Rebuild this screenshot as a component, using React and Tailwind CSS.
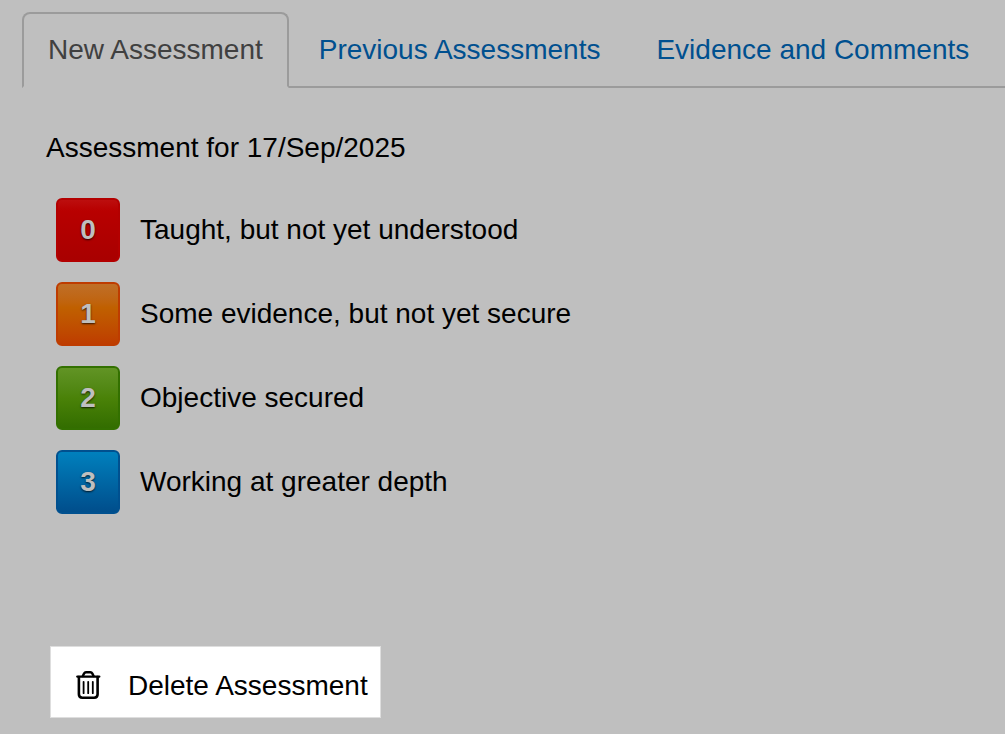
const tabs = ['New Assessment', 'Previous Assessments', 'Evidence and Comments'];

const grades = [
  {
    value: '0',
    label: 'Taught, but not yet understood',
    style: 'border-[#b30000] bg-linear-to-b from-[#bd1010] via-[#b80000] via-20% to-[#a80000]',
  },
  {
    value: '1',
    label: 'Some evidence, but not yet secure',
    style: 'border-[#be3c00] bg-linear-to-b from-[#bf7028] via-[#c06000] via-40% to-[#be3a00]',
  },
  {
    value: '2',
    label: 'Objective secured',
    style: 'border-[#337000] bg-linear-to-b from-[#639526] via-[#4a8208] via-50% to-[#316c00]',
  },
  {
    value: '3',
    label: 'Working at greater depth',
    style: 'border-[#00508f] bg-linear-to-b from-[#0082bf] to-[#004c8a]',
  },
];

function TrashIcon() {
  return (
    <svg width="26" height="30" viewBox="0 0 26 30" fill="none" stroke="currentColor" strokeLinecap="round" strokeLinejoin="round" aria-hidden="true">
      <path d="M1.4 5.6h21.8" strokeWidth="2.4" />
      <path d="M6.8 5L8 2.6Q8.7 1.3 10 1.3H14.4Q15.7 1.3 16.4 2.6L17.6 5" strokeWidth="2.4" />
      <path d="M2.9 6V23.3Q2.9 26.7 6.3 26.7H18.2Q21.6 26.7 21.6 23.3V6" strokeWidth="2.6" />
      <path d="M7.6 10.8V22.2M12.2 10.8V22.2M16.8 10.8V22.2" strokeWidth="1.8" />
    </svg>
  );
}

function Tabs() {
  return (
    <div role="tablist" className="ml-[22px] flex pt-3 shadow-[inset_0_-2px_0_#9b9b9b]">
      {tabs.map((tab, i) => (
        <button
          key={tab}
          type="button"
          role="tab"
          aria-selected={i === 0}
          className={
            i === 0
              ? 'mr-1 shrink-0 whitespace-nowrap rounded-t-lg border-2 border-[#9b9b9b] border-b-[#bfbfbf] bg-[#bfbfbf] px-6 py-4 leading-10 text-[#404040]'
              : 'mr-1 shrink-0 whitespace-nowrap border-2 border-transparent px-6 py-4 leading-10 text-[#00508f]'
          }
        >
          {tab}
        </button>
      ))}
    </div>
  );
}

export default function App() {
  return (
    <div className="min-h-screen overflow-hidden bg-[#bfbfbf] pb-4 font-['Liberation_Sans',Arial,sans-serif] text-[28px] text-black">
      <Tabs />

      <main className="px-[46px] pt-10">
        <h2 className="leading-10">Assessment for 17/Sep/2025</h2>

        <ul className="mt-[30px] flex flex-col gap-5 pl-[10px]">
          {grades.map((grade) => (
            <li key={grade.value} className="flex items-center gap-5">
              <button
                type="button"
                id={`grade-${grade.value}`}
                aria-label={grade.label}
                className={`size-16 shrink-0 rounded-md border-2 bg-origin-border text-[28px] font-bold text-[#bfbfbf] [text-shadow:0_1px_2px_rgba(0,0,0,0.75)] ${grade.style}`}
              >
                {grade.value}
              </button>
              <label htmlFor={`grade-${grade.value}`}>{grade.label}</label>
            </li>
          ))}
        </ul>

        <button
          type="button"
          className="ml-1 mt-[132px] flex h-[72px] items-center gap-[26px] border border-[#dedede] bg-white pl-[25px] pr-3 pt-2"
        >
          <TrashIcon />
          Delete Assessment
        </button>
      </main>
    </div>
  );
}
